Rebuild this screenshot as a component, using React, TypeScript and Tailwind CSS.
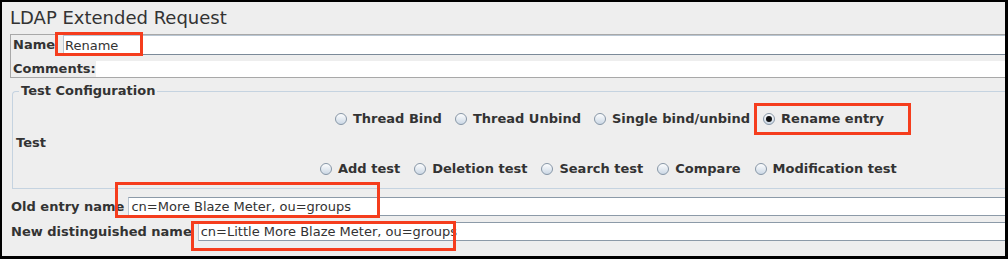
import React, { useId } from "react"

const font = "font-['DejaVu_Sans',sans-serif]"

function Radio({ label, checked = false }: { label: string; checked?: boolean }) {
  const gid = "rg" + useId().replace(/[^a-zA-Z0-9]/g, "")
  return (
    <div className="flex items-center gap-[6px]">
      <svg width="12" height="12" viewBox="0 0 12 12">
        <defs>
          <linearGradient id={gid} x1="0" y1="0" x2="0" y2="1">
            <stop offset="0" stopColor="#ffffff" />
            <stop offset="1" stopColor="#c9d6e4" />
          </linearGradient>
        </defs>
        <circle cx="6" cy="6" r="5.5" fill={`url(#${gid})`} stroke="#8796a6" strokeWidth="1" />
        {checked && <circle cx="6" cy="6" r="3" fill="#111111" />}
      </svg>
      <span className="text-[13px] font-bold text-[#333333] leading-[16px]">{label}</span>
    </div>
  )
}

function RedBox({ className }: { className: string }) {
  return <div className={`absolute border-[3px] border-[#f53d1d] pointer-events-none ${className}`} />
}

export default function App() {
  return (
    <div className={`relative w-[1008px] h-[259px] bg-black pt-[2px] pl-[2px] pr-[3px] pb-[3px] ${font}`}>
      <div className="h-full bg-[#eeeeee] overflow-hidden">
        {/* Title */}
        <div className="pt-[5px] pl-[8px] h-[27px] text-[18px] leading-[22px] text-[#333333]">
          LDAP Extended Request
        </div>

        {/* Name / Comments */}
        <div className="mt-[5px] ml-[8px] border-t border-l border-b border-[#a8a8a8]">
          <div className="flex items-center h-[20px]">
            <span className="pl-[2px] text-[13px] font-bold text-[#333333]">Name</span>
            <input
              readOnly
              defaultValue="Rename"
              className="ml-[8px] flex-1 h-[20px] bg-white border-t border-l border-b border-t-[#b9c6d3] border-l-[#b9c6d3] border-b-[#7b8a99] pl-[1px] text-[13px] text-[#333333] outline-none"
            />
          </div>
          <div className="flex items-center h-[16px] mt-[6px]">
            <span className="pl-[2px] text-[13px] font-bold text-[#333333]">Comments:</span>
            <div className="flex-1 h-[16px] bg-white" />
          </div>
        </div>

        {/* Test Configuration */}
        <fieldset className="mt-[5px] ml-[10px] border border-r-0 border-[#c5d3e0] rounded-tl-[4px] pb-[9px]">
          <legend className="ml-[6px] px-[2px] text-[13px] font-bold leading-[16px] text-[#333333]">
            Test Configuration
          </legend>
          <div className="flex items-center gap-[13px] h-[20px] mt-[10px] pl-[322px]">
            <Radio label="Thread Bind" />
            <Radio label="Thread Unbind" />
            <Radio label="Single bind/unbind" />
            <Radio label="Rename entry" checked />
          </div>
          <div className="mt-[6px] pl-[3px] h-[16px] text-[13px] font-bold leading-[16px] text-[#333333]">Test</div>
          <div className="flex items-center gap-[14px] h-[20px] mt-[8px] pl-[307px]">
            <Radio label="Add test" />
            <Radio label="Deletion test" />
            <Radio label="Search test" />
            <Radio label="Compare" />
            <Radio label="Modification test" />
          </div>
        </fieldset>

        {/* Entry names */}
        <div className="flex items-center h-[19px] mt-[8px] pl-[9px]">
          <span className="text-[13px] font-bold text-[#333333]">Old entry name</span>
          <input
            readOnly
            defaultValue="cn=More Blaze Meter, ou=groups"
            className="ml-[4px] flex-1 h-[19px] bg-white border-t border-l border-b border-t-[#8c9aa8] border-l-[#b9c6d3] border-b-[#8c9aa8] pl-[2px] text-[13px] text-[#333333] outline-none"
          />
        </div>
        <div className="flex items-center h-[19px] mt-[6px] pl-[9px]">
          <span className="text-[13px] font-bold text-[#333333]">New distinguished name</span>
          <input
            readOnly
            defaultValue="cn=Little More Blaze Meter, ou=groups"
            className="ml-[6px] flex-1 h-[19px] bg-white border-t border-l border-b border-t-[#8c9aa8] border-l-[#b9c6d3] border-b-[#8c9aa8] pl-[2px] text-[13px] text-[#333333] outline-none"
          />
        </div>
      </div>

      {/* Annotation boxes */}
      <RedBox className="left-[55px] top-[32px] w-[88px] h-[24px]" />
      <RedBox className="left-[754px] top-[103px] w-[157px] h-[32px]" />
      <RedBox className="left-[115px] top-[182px] w-[265px] h-[36px]" />
      <RedBox className="left-[191px] top-[221px] w-[265px] h-[30px]" />
    </div>
  )
}
